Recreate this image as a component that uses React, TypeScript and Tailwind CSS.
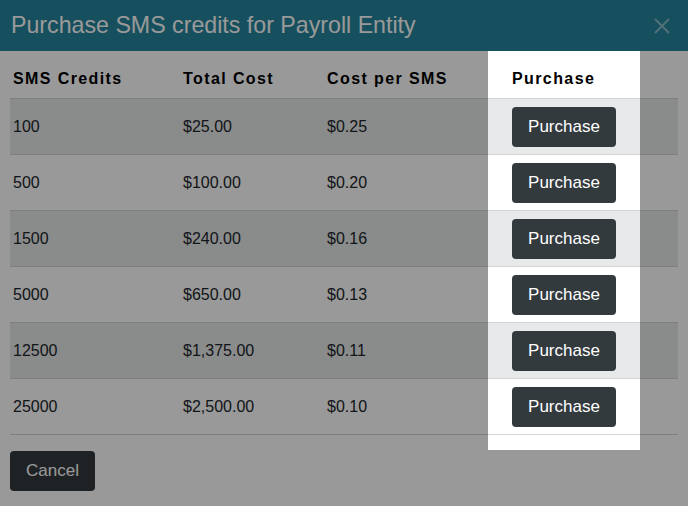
import { useState } from 'react';

interface CreditPack {
  credits: number;
  total: string;
  perSms: string;
}

const packs: CreditPack[] = [
  { credits: 100, total: '$25.00', perSms: '$0.25' },
  { credits: 500, total: '$100.00', perSms: '$0.20' },
  { credits: 1500, total: '$240.00', perSms: '$0.16' },
  { credits: 5000, total: '$650.00', perSms: '$0.13' },
  { credits: 12500, total: '$1,375.00', perSms: '$0.11' },
  { credits: 25000, total: '$2,500.00', perSms: '$0.10' },
];

const App = () => {
  const [selected, setSelected] = useState<number | null>(null);

  return (
    <div className="relative h-[506px] w-[688px] overflow-hidden bg-white [font-family:'Liberation_Sans',Arial,sans-serif] text-[#212529]">
      {/* Modal header */}
      <div className="flex h-[51px] items-center justify-between bg-[#25849b] pl-[11px] pr-[17px]">
        <h1 className="text-[23.2px] leading-none text-white">
          Purchase SMS credits for Payroll Entity
        </h1>
        <button className="text-white/45">
          <svg width="18" height="18" viewBox="0 0 18 18" fill="none" stroke="currentColor" strokeWidth="2">
            <path d="M2 2l14 14M16 2L2 16" />
          </svg>
        </button>
      </div>

      {/* Modal body */}
      <div className="px-[10px]">
        <div className="grid grid-cols-[170px_144px_185px_1fr]">
          {/* Table head */}
          <div className="h-[47px] pl-[3px] pt-[19px] text-[16px] font-bold leading-[18px] tracking-[1.4px] text-black">SMS Credits</div>
          <div className="h-[47px] pl-[3px] pt-[19px] text-[16px] font-bold leading-[18px] tracking-[1.4px] text-black">Total Cost</div>
          <div className="h-[47px] pl-[3px] pt-[19px] text-[16px] font-bold leading-[18px] tracking-[1.4px] text-black">Cost per SMS</div>
          <div className="h-[47px] pl-[3px] pt-[19px] text-[16px] font-bold leading-[18px] tracking-[1.4px] text-black">Purchase</div>

          {packs.map((pack, i) => {
            const rowClass = `flex h-[56px] items-center border-t border-[#d4d4d4] pl-[3px] text-[16px] ${
              i % 2 === 0 ? 'bg-[#e7e9ea]' : 'bg-white'
            }`;
            return (
              <div key={pack.credits} className="contents">
                <div className={rowClass}>{pack.credits}</div>
                <div className={rowClass}>{pack.total}</div>
                <div className={rowClass}>{pack.perSms}</div>
                <div className={rowClass}>
                  <button
                    onClick={() => setSelected(pack.credits)}
                    className={`h-[40px] w-[104px] rounded-[4px] text-[17px] text-white ${
                      selected === pack.credits ? 'bg-[#23272b]' : 'bg-[#323a3e]'
                    }`}
                  >
                    Purchase
                  </button>
                </div>
              </div>
            );
          })}
        </div>
        <div className="border-t border-[#d4d4d4] pt-[16px]">
          <button className="h-[40px] rounded-[4px] bg-[#343a3f] px-[16px] text-[17px] text-white">Cancel</button>
        </div>
      </div>

      {/* Tour highlight on the purchase column */}
      <div className="pointer-events-none absolute left-[488px] top-[51px] h-[399px] w-[152px] shadow-[0_0_0_9999px_rgba(0,0,0,0.4)]" />
    </div>
  );
};

export default App;
